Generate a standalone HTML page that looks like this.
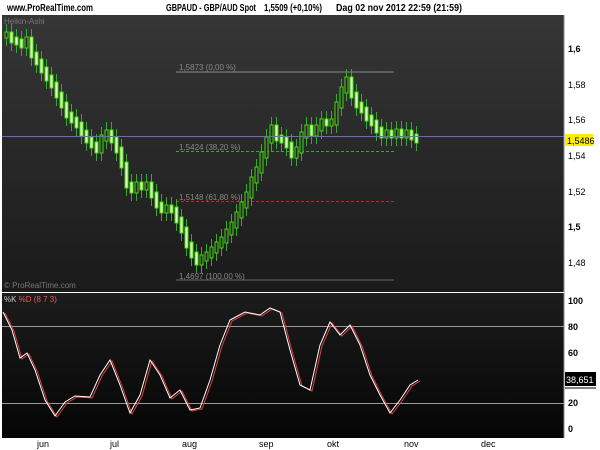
<!DOCTYPE html>
<html><head><meta charset="utf-8"><style>
body{margin:0;width:600px;height:450px;background:#fff;overflow:hidden;font-family:"Liberation Sans",sans-serif}
svg{position:absolute;left:0;top:0}
</style></head><body>
<svg id="s" width="600" height="450" xmlns="http://www.w3.org/2000/svg" font-family="Liberation Sans, sans-serif">
<defs>
<linearGradient id="g1" x1="0" y1="0" x2="0" y2="1"><stop offset="0" stop-color="#363636"/><stop offset="1" stop-color="#1a1a1a"/></linearGradient>
<linearGradient id="g2" x1="0" y1="0" x2="0" y2="1"><stop offset="0" stop-color="#1c1c1c"/><stop offset="1" stop-color="#050505"/></linearGradient>
</defs>
<text x="7" y="11" font-size="10" font-weight="bold" fill="#000" textLength="86" lengthAdjust="spacingAndGlyphs">www.ProRealTime.com</text>
<text x="166" y="11" font-size="10" font-weight="bold" fill="#000" textLength="90" lengthAdjust="spacingAndGlyphs">GBPAUD - GBP/AUD Spot</text>
<text x="264" y="11" font-size="10" font-weight="bold" fill="#000" textLength="58" lengthAdjust="spacingAndGlyphs">1,5509 (+0,10%)</text>
<text x="336" y="11" font-size="10" font-weight="bold" fill="#000" textLength="126" lengthAdjust="spacingAndGlyphs">Dag  02 nov 2012 22:59 (21:59)</text>
<rect x="2" y="15" width="562" height="277" fill="url(#g1)"/>
<rect x="2" y="293" width="562" height="145" fill="url(#g2)"/>
<line x1="564" y1="15" x2="564" y2="438" stroke="#888"/>
<line x1="2" y1="292.5" x2="564" y2="292.5" stroke="#fff"/>
<text x="4" y="24" font-size="8" fill="#777">Heikin-Ashi</text>
<text x="4" y="288" font-size="8" fill="#777">© ProRealTime.com</text>
<line x1="176" y1="72" x2="394" y2="72" stroke="#888"/>
<text x="179" y="70" font-size="8" fill="#888">1,5873 (0,00 %)</text>
<line x1="176" y1="151.5" x2="394" y2="151.5" stroke="#3a3" stroke-dasharray="3,2"/>
<text x="179" y="150" font-size="8" fill="#888">1,5424 (38,20 %)</text>
<line x1="176" y1="201.5" x2="394" y2="201.5" stroke="#c22" stroke-dasharray="3,2"/>
<text x="179" y="200" font-size="8" fill="#888">1,5148 (61,80 %)</text>
<line x1="176" y1="280" x2="394" y2="280" stroke="#666"/>
<text x="179" y="279" font-size="8" fill="#888">1,4697 (100,00 %)</text>
<g id="c"></g>
<line x1="2" y1="136.5" x2="564" y2="136.5" stroke="#6a6acc"/>
<g font-size="9" fill="#000">
<text x="568" y="52" font-weight="bold">1,6</text>
<text x="568" y="88">1,58</text>
<text x="568" y="123">1,56</text>
<text x="568" y="159">1,54</text>
<text x="568" y="195">1,52</text>
<text x="568" y="230" font-weight="bold">1,5</text>
<text x="568" y="266">1,48</text>
</g>
<rect x="565" y="134" width="28" height="12" fill="#ffee00"/>
<text x="567" y="144" font-size="9">1,5486</text>
<line x1="2" y1="326.5" x2="564" y2="326.5" stroke="#999"/>
<line x1="2" y1="403.5" x2="564" y2="403.5" stroke="#999"/>
<text x="4" y="302" font-size="8" fill="#ccc">%K <tspan fill="#e55">%D (8 7 3)</tspan></text>
<polyline id="d" fill="none" stroke="#e04040" stroke-width="1"/>
<polyline id="k" fill="none" stroke="#fff" stroke-width="1"/>
<g font-size="9" fill="#000" font-weight="bold">
<text x="568" y="304">100</text><text x="568" y="330">80</text><text x="568" y="356">60</text>
<text x="568" y="381">40</text><text x="568" y="406">20</text><text x="568" y="432">0</text>
</g>
<rect x="565" y="372" width="31" height="14" fill="#000"/>
<line x1="565" y1="388" x2="596" y2="388" stroke="#000"/>
<text x="566" y="383" font-size="9" fill="#fff">38,651</text>
<g font-size="9" fill="#000">
<text x="37" y="447">jun</text><text x="110" y="447">jul</text><text x="182" y="447">aug</text>
<text x="259" y="447">sep</text><text x="327" y="447">okt</text><text x="404" y="447">nov</text><text x="481" y="447">dec</text>
</g>
</svg>
<script>
(function(){
var P=[[5,35],[10,40],[15,42],[20,45],[25,40],[30,55],[35,62],[40,70],[45,78],[50,85],[55,95],[60,105],[65,115],[70,120],[75,125],[80,133],[85,140],[90,145],[95,150],[100,138],[105,133],[110,140],[115,150],[120,165],[125,185],[130,190],[135,185],[140,187],[145,185],[150,195],[155,205],[160,210],[165,208],[170,210],[175,220],[180,230],[185,245],[190,255],[195,262],[200,258],[205,255],[210,250],[215,245],[220,240],[225,232],[230,225],[235,215],[240,205],[245,195],[250,180],[255,170],[260,155],[265,140],[270,128],[275,138],[280,140],[285,145],[290,155],[295,150],[300,135],[305,128],[310,133],[315,128],[320,122],[325,123],[330,122],[335,105],[340,90],[345,80],[350,95],[355,105],[360,110],[365,118],[370,123],[375,130],[380,135],[385,133],[390,135],[395,132],[400,135],[405,133],[410,137],[415,140]];
var h='';
for(var i=0;i<P.length;i++){var x=P[i][0],y=P[i][1];var pr=i?P[i-1][1]:y;var dn=y>pr;var ty=Math.min(y,pr)-3,bh=Math.abs(y-pr)+6;
h+='<line x1="'+(x+1.5)+'" y1="'+(ty-8)+'" x2="'+(x+1.5)+'" y2="'+(ty+bh+8)+'" stroke="#3a3" />';
h+='<rect x="'+x+'" y="'+ty+'" width="3" height="'+bh+'" fill="'+(dn?'#ddffcc':'#223')+'" stroke="#44dd00" stroke-width="1"/>';}
document.getElementById('c').innerHTML=h;
var K=[[3,312],[12,330],[20,358],[27,353],[35,370],[45,400],[55,416],[65,402],[75,396],[90,397],[100,375],[110,360],[120,385],[130,413],[140,395],[150,360],[160,375],[170,398],[180,390],[190,410],[200,408],[210,380],[220,345],[230,320],[245,312],[260,315],[270,308],[280,312],[290,350],[300,385],[310,390],[320,345],[330,322],[340,335],[350,325],[360,345],[370,375],[380,395],[390,413],[400,400],[410,385],[418,380]];
document.getElementById('k').setAttribute('points',K.map(function(p){return p.join(',')}).join(' '));
document.getElementById('d').setAttribute('points',K.map(function(p){return (p[0]+2)+','+(p[1]+1)}).join(' '));
})();
</script>
</body></html>
